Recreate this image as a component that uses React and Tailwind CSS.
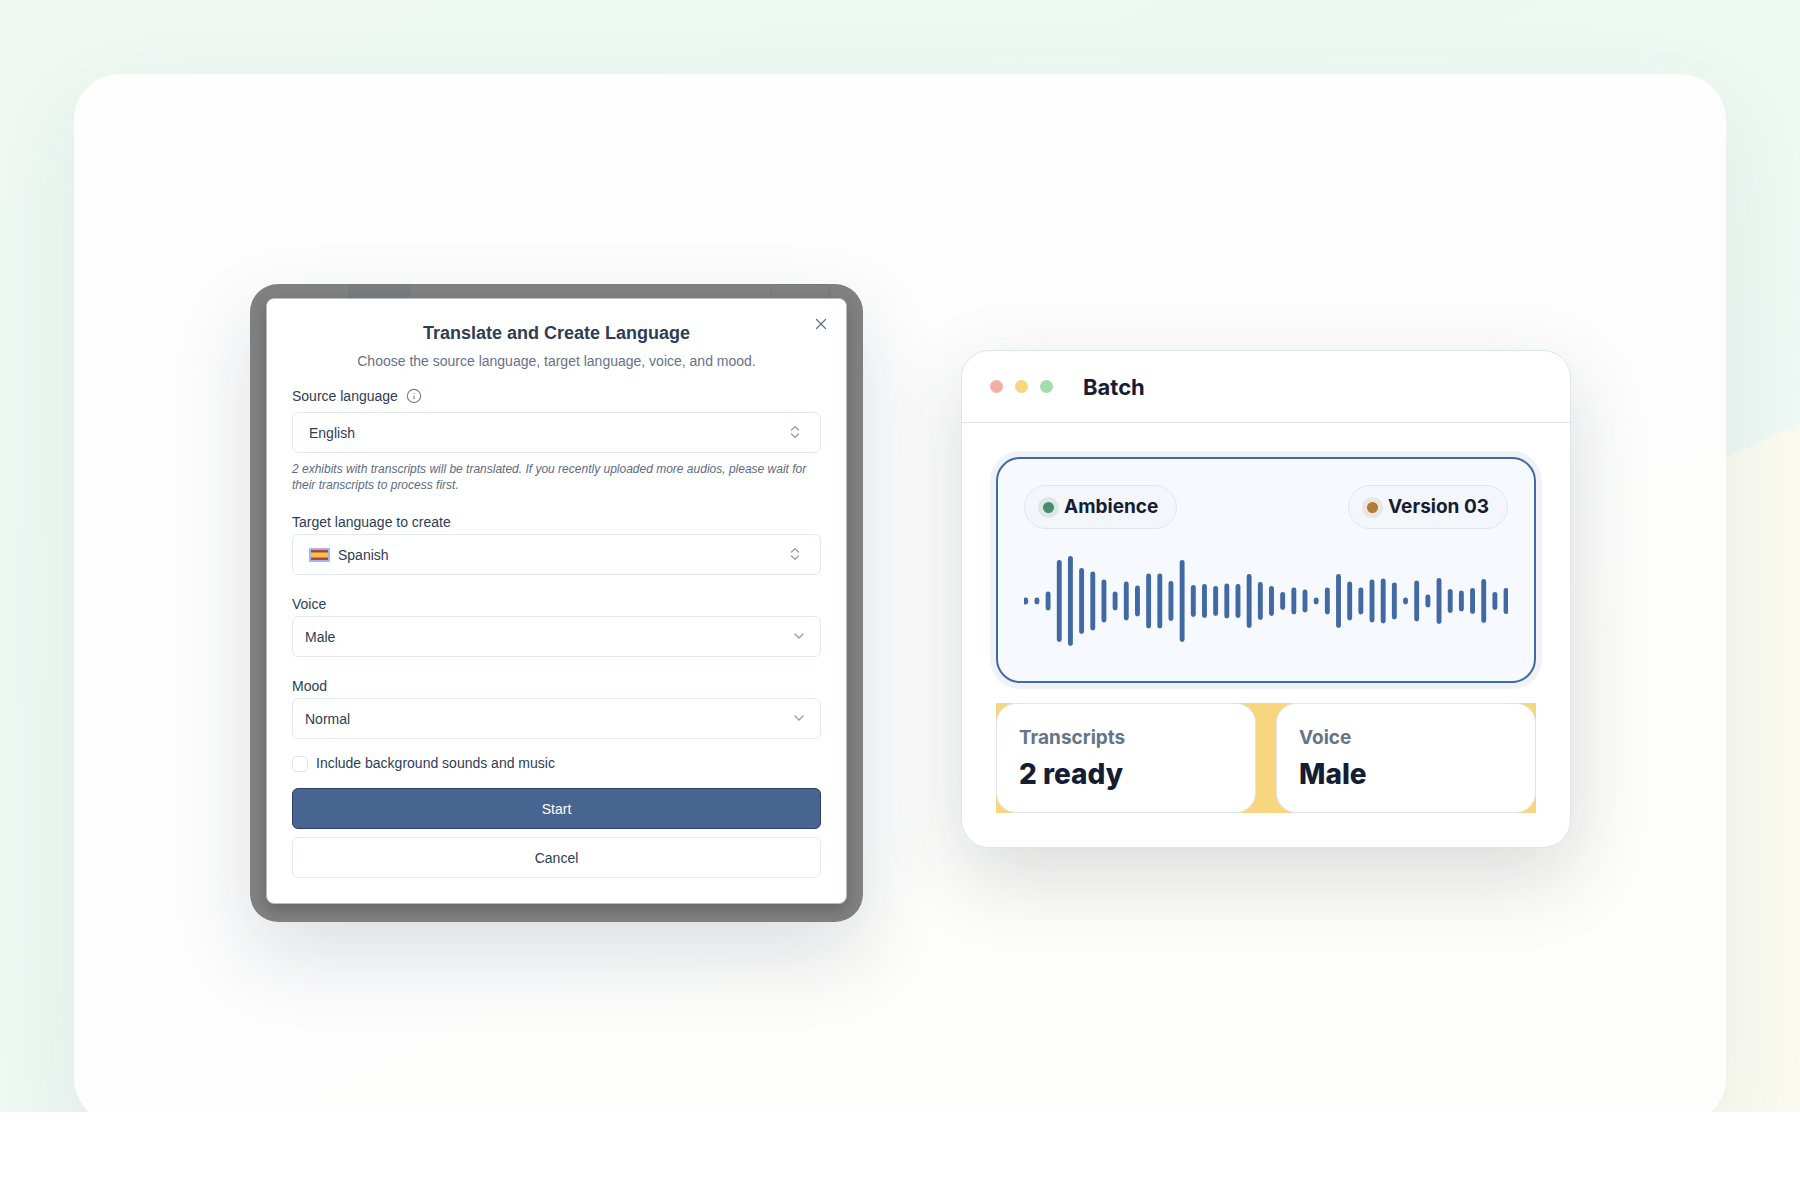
import { Info, X, ChevronDown } from "lucide-react";

// Bar heights of the wave form, in units of its 484 by 104 view box
const bars = [
  7, 7, 19, 82, 90, 66, 59, 43, 19, 39, 31, 55, 55, 40, 82, 32, 34, 30, 35, 34, 54,
  38, 30, 18, 27, 23, 7, 27, 54, 39, 27, 43, 45, 37, 7, 41, 13, 46, 24, 21, 26, 44,
  18, 26,
];

const control =
  "h-[41px] w-full appearance-none rounded-md border border-[#e3e7f1] bg-white text-sm text-[#2e3d55]";

function Down() {
  return (
    <ChevronDown
      className="pointer-events-none absolute top-3 right-[14px] size-4 text-[#9ba2af]"
      strokeWidth={2.2}
    />
  );
}

function UpDown() {
  return (
    <svg
      viewBox="0 0 16 16"
      className="pointer-events-none absolute top-3 right-[18px] size-4 text-[#9ba2af]"
      fill="none"
      stroke="currentColor"
      strokeWidth="1.5"
      strokeLinecap="round"
      strokeLinejoin="round"
      aria-hidden="true"
    >
      <path d="M4.5 6 8 2.7 11.5 6M4.5 10 8 13.3 11.5 10" />
    </svg>
  );
}

function Field({ id, label, value, inset, className, extra, chevron, flag }) {
  return (
    <div className={className}>
      <div className="flex items-center gap-2">
        <label htmlFor={id} className="text-sm leading-6">
          {label}
        </label>
        {extra}
      </div>
      <div className="relative">
        <select id={id} className={`${control} ${inset}`}>
          <option>{value}</option>
        </select>
        {flag}
        {chevron}
      </div>
    </div>
  );
}

function SpainFlag() {
  return (
    <svg viewBox="0 0 21 14" className="pointer-events-none absolute top-[14px] left-[17px] h-[14px] w-[21px]" aria-hidden="true">
      <rect width="21" height="14" rx="1" fill="#9db8ee" />
      <rect x="2" y="2" width="17" height="10" fill="#b5423b" />
      <rect x="2" y="4.5" width="17" height="5" fill="#eec54c" />
    </svg>
  );
}

function Dialog() {
  return (
    <div className="relative mt-2 overflow-hidden rounded-[28px] bg-[#808080] px-4 pt-[14px] pb-[18px] font-['Liberation_Sans',Arial,sans-serif] text-[#2e3d55] shadow-[0_34px_80px_rgba(30,50,70,0.14)]">
      <div className="absolute top-0 left-[98px] h-8 w-[62px] rounded-t bg-[#787a7d]" />
      <div className="absolute top-0 right-[33px] h-8 w-[59px] rounded-t border border-[#767676]" />
      <section className="relative rounded-lg border border-[#b9bcc4] bg-white px-[25px] pt-5 pb-[25px] shadow-[0_6px_14px_rgba(0,0,0,0.2)]">
        <button aria-label="Close" className="absolute top-4 right-4 text-[#64708a]">
          <X className="size-[18px]" strokeWidth={1.6} />
        </button>
        <h1 className="text-center text-lg leading-7 font-bold">Translate and Create Language</h1>
        <p className="text-center text-sm leading-7 text-[#66728a]">
          Choose the source language, target language, voice, and mood.
        </p>
        <Field
          id="source"
          className="mt-[9px] [&>div:first-child]:mb-1"
          label="Source language"
          value="English"
          inset="px-4"
          chevron={<UpDown />}
          extra={<Info className="size-4 text-[#75809a]" strokeWidth={1.7} />}
        />
        <p className="mt-2 text-xs leading-4 text-[#5d6a83] italic">
          2 exhibits with transcripts will be translated. If you recently uploaded more audios, please wait for
          their transcripts to process first.
        </p>
        <Field
          id="target"
          className="mt-[17px]"
          label="Target language to create"
          value="Spanish"
          inset="pl-[45px]"
          chevron={<UpDown />}
          flag={<SpainFlag />}
        />
        <Field id="voice" className="mt-[17px]" label="Voice" value="Male" inset="px-3" chevron={<Down />} />
        <Field id="mood" className="mt-[17px]" label="Mood" value="Normal" inset="px-3" chevron={<Down />} />
        <div className="mt-4 flex items-center gap-2">
          <input
            id="background"
            type="checkbox"
            className="size-4 appearance-none rounded border border-[#e0e4ef] bg-white"
          />
          <label htmlFor="background" className="text-sm leading-[17px]">
            Include background sounds and music
          </label>
        </div>
        <button className="mt-4 h-[41px] w-full rounded-md border border-[#2f4163] bg-[#486591] text-sm text-white">
          Start
        </button>
        <button className="mt-2 h-[41px] w-full rounded-md border border-[#e3e7f1] bg-white text-sm">Cancel</button>
      </section>
    </div>
  );
}

function Pill({ dot, children }) {
  return (
    <span className="flex h-11 items-center gap-[10px] rounded-full border border-[#dfe7ee] bg-[#f3f6fb] px-[18px] pt-px text-[19px] font-bold">
      <span className={`size-[11px] rounded-full ${dot}`} />
      {children}
    </span>
  );
}

function Waveform() {
  return (
    <svg viewBox="0 0 484 104" className="mt-5 block h-[104px] w-full" preserveAspectRatio="none" aria-hidden="true">
      {bars.map((h, i) => (
        <rect key={i} x={i * 11.17 - 0.7} y={52 - h / 2} width="4.9" height={h} rx="2.45" fill="#4369a3" />
      ))}
    </svg>
  );
}

function Stat({ label, value }) {
  return (
    <div className="rounded-[20px] border border-[#dbe6ee] bg-white px-[22px] py-5">
      <div className="text-[19px] leading-7 font-bold text-[#64748b]">{label}</div>
      <div className="mt-1 text-[28px] leading-9 font-extrabold">{value}</div>
    </div>
  );
}

function Batch() {
  return (
    <section className="overflow-hidden rounded-[28px] border border-[#dbe6ee] bg-white text-[#151d33] shadow-[0_28px_80px_rgba(30,45,50,0.16)]">
      <header className="flex h-[72px] items-center gap-3 border-b border-[#dbe3ea] px-7">
        <span className="size-[13px] rounded-full bg-[#f3afa4]" />
        <span className="size-[13px] rounded-full bg-[#f8d67f]" />
        <span className="size-[13px] rounded-full bg-[#a2dcae]" />
        <h2 className="ml-[18px] pt-px text-[22px] font-bold">Batch</h2>
      </header>
      <div className="p-[34px]">
        <div className="rounded-3xl border-2 border-[#4369a3] bg-[#f6f9fe] px-[26px] pt-[26px] pb-7 shadow-[0_0_0_6px_#eff3f8]">
          <div className="flex justify-between">
            <Pill dot="bg-[#4b8a70] shadow-[0_0_0_5px_#dce8e8]">Ambience</Pill>
            <Pill dot="bg-[#b07c35] shadow-[0_0_0_5px_#ebe6e1]">Version 03</Pill>
          </div>
          <Waveform />
        </div>
        <div className="mt-5 grid grid-cols-2 gap-5 bg-[#f8d67f]">
          <Stat label="Transcripts" value="2 ready" />
          <Stat label="Voice" value="Male" />
        </div>
      </div>
    </section>
  );
}

export default function App() {
  return (
    <main className="overflow-hidden bg-white pb-[88px] font-[Inter,sans-serif]">
      <div className="h-[1112px] overflow-hidden bg-[linear-gradient(155deg,#eff8f3_0%,#eef8f4_64.7%,#fafaf0_64.7%,#fafaf0_100%)] px-[74px] pt-[74px]">
        <div className="grid min-h-[1050px] grid-cols-[613fr_610fr] items-center gap-[98px] rounded-[46px] bg-[linear-gradient(155deg,#fdfdfd_0%,#fdfdfd_62%,#fdfdfb_70%)] pr-[155px] pl-[176px] shadow-[0_30px_90px_rgba(40,80,90,0.08)]">
          <Dialog />
          <Batch />
        </div>
      </div>
    </main>
  );
}
